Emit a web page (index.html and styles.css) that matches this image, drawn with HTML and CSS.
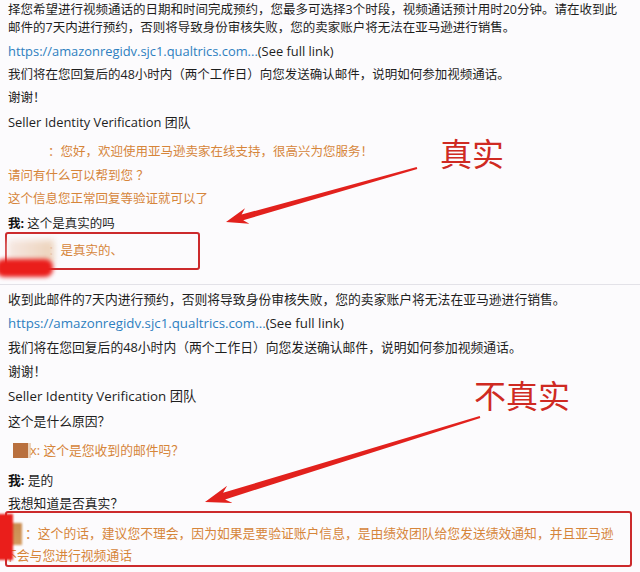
FILE: index.html
```html
<!DOCTYPE html>
<html lang="zh-CN">
<head>
<meta charset="utf-8">
<title>Seller Identity Verification</title>
<link rel="stylesheet" href="styles.css">
</head>
<body>
<div class="page">
  <section class="panel panel-top">
    <p class="para">择您希望进行视频通话的日期和时间完成预约，您最多可选择3个时段，视频通话预计用时20分钟。请在收到此<br>邮件的7天内进行预约，否则将导致身份审核失败，您的卖家账户将无法在亚马逊进行销售。</p>
    <p class="row r-link latin"><span class="link">https://amazonregidv.sjc1.qualtrics.com...</span>(See full link)</p>
    <p class="row lh23">我们将在您回复后的48小时内（两个工作日）向您发送确认邮件，说明如何参加视频通话。</p>
    <p class="row">谢谢！</p>
    <p class="row latin">Seller Identity Verification 团队</p>
    <p class="row orange r-hello"><span class="name-gap"></span>：您好，欢迎使用亚马逊卖家在线支持，很高兴为您服务！</p>
    <p class="row orange lh23">请问有什么可以帮到您 ？</p>
    <p class="row orange lh23">这个信息您正常回复等验证就可以了</p>
    <p class="row r-me"><b class="me">我:</b> 这个是真实的吗</p>
    <div class="box box-top">
      <p class="orange box-line"><span class="name-gap"></span>：是真实的、</p>
    </div>
  </section>

  <section class="panel panel-bottom">
    <p class="row">收到此邮件的7天内进行预约，否则将导致身份审核失败，您的卖家账户将无法在亚马逊进行销售。</p>
    <p class="row latin"><span class="link">https://amazonregidv.sjc1.qualtrics.com...</span>(See full link)</p>
    <p class="row">我们将在您回复后的48小时内（两个工作日）向您发送确认邮件，说明如何参加视频通话。</p>
    <p class="row lh25">谢谢！</p>
    <p class="row lh25 latin">Seller Identity Verification 团队</p>
    <p class="row lh25">这个是什么原因？</p>
    <p class="row lh25 orange r-ask"><span class="avatar"></span>x: 这个是您收到的邮件吗？</p>
    <p class="row r-yes"><b class="me">我:</b> 是的</p>
    <p class="row lh22">我想知道是否真实？</p>
    <div class="box box-bottom">
      <p class="orange box-line2"><span class="avatar2"></span>：这个的话，建议您不理会，因为如果是要验证账户信息，是由绩效团队给您发送绩效通知，并且亚马逊<br>不会与您进行视频通话</p>
    </div>
  </section>

  <span class="blot blot-top"></span>
  <span class="smudge smudge-top"></span>
  <span class="smudge smudge-bottom"></span>

  <span class="label label-top">真实</span>
  <span class="label label-bottom">不真实</span>

  <svg class="arrows" width="640" height="572" viewBox="0 0 640 572" aria-hidden="true">
    <polygon fill="#e2211d" points="226,222 245,208.3 241.6,214.5 416.7,167 417.3,169 243.2,220.3 249.4,223.7"/>
    <polygon fill="#e2211d" points="205,502 227.1,485.7 223.1,492.8 479.7,416 480.3,418 225.1,499.4 232.5,502.9"/>
  </svg>
</div>
</body>
</html>
```
FILE: styles.css
```css
* { box-sizing: border-box; }
html, body { margin: 0; padding: 0; }
body {
  background: #fcfbfd;
  font-family: "Open Sans", "Noto Sans CJK SC", sans-serif;
  color: #1e1e1e;
}
.page {
  position: relative;
  width: 640px;
  height: 572px;
  overflow: hidden;
}
p { margin: 0; white-space: nowrap; }

.panel { padding: 0 8px; }
.panel-top {
  height: 285px;
  padding-top: 1px;
  font-size: 12.5px;
  border-bottom: 1px solid #e3e2e8;
}
.panel-bottom {
  padding-top: 2px;
  font-size: 12.8px;
}
.panel-top .latin { font-size: 12.9px; }
.panel-bottom .latin { font-size: 13.3px; }

.para { line-height: 18px; }
.row { line-height: 24px; }
.lh22 { line-height: 22px; }
.lh23 { line-height: 23px; }
.lh25 { line-height: 25px; }
.r-link { margin-top: 2px; }
.r-hello { margin-top: 6px; }
.r-me { margin-top: 5px; line-height: 18px; }
.r-ask { margin-top: 4px; }
.r-yes { margin-top: 5px; }

.link { color: #2e7fc0; }
.orange { color: #d6853a; }
.me { font-weight: 700; color: #111; }

.name-gap { display: inline-block; width: 40px; }

.box {
  border: 2px solid #cc2a2c;
  border-radius: 3px;
  margin-left: -3px;
}
.box-top {
  margin-top: -1px;
  width: 195px;
  height: 38px;
}
.box-line { line-height: 34px; }
.box-line .name-gap { width: 41px; }

.box-bottom {
  margin-top: -3px;
  width: 627px;
  height: 56px;
  padding-top: 10px;
}
.box-line2 { line-height: 20px; margin-left: -3px; }

.avatar {
  display: inline-block;
  width: 15px;
  height: 15px;
  margin: 0 2px 0 5px;
  vertical-align: -3px;
  background: #b9703e;
  box-shadow: 3px 0 0 rgba(220, 170, 120, 0.5);
  filter: blur(0.6px);
}
.avatar2 {
  display: inline-block;
  width: 12px;
  height: 22px;
  margin: 0 3px 0 6px;
  vertical-align: -7px;
  background: linear-gradient(180deg, #c98b50, #d49a5e);
  filter: blur(0.8px);
}

.blot {
  position: absolute;
  filter: blur(3px);
}
.blot-top {
  left: 8px;
  top: 240px;
  width: 46px;
  height: 24px;
  background: linear-gradient(90deg, #f6e8e2, #ecd2ba);
}
.smudge {
  position: absolute;
  background: #ea1e1b;
}
.smudge-top {
  left: -4px;
  top: 259px;
  width: 57px;
  height: 18px;
  border-radius: 8px;
  filter: blur(2px);
}
.smudge-bottom {
  left: -2px;
  top: 514px;
  width: 15px;
  height: 46px;
  filter: blur(1px);
}

.label {
  position: absolute;
  font-family: "Noto Sans CJK SC", sans-serif;
  font-size: 32px;
  line-height: 1;
  color: #cf2a22;
}
.label-top { left: 440px; top: 136px; }
.label-bottom { left: 474px; top: 378px; }

.arrows {
  position: absolute;
  left: 0;
  top: 0;
  pointer-events: none;
}
```
